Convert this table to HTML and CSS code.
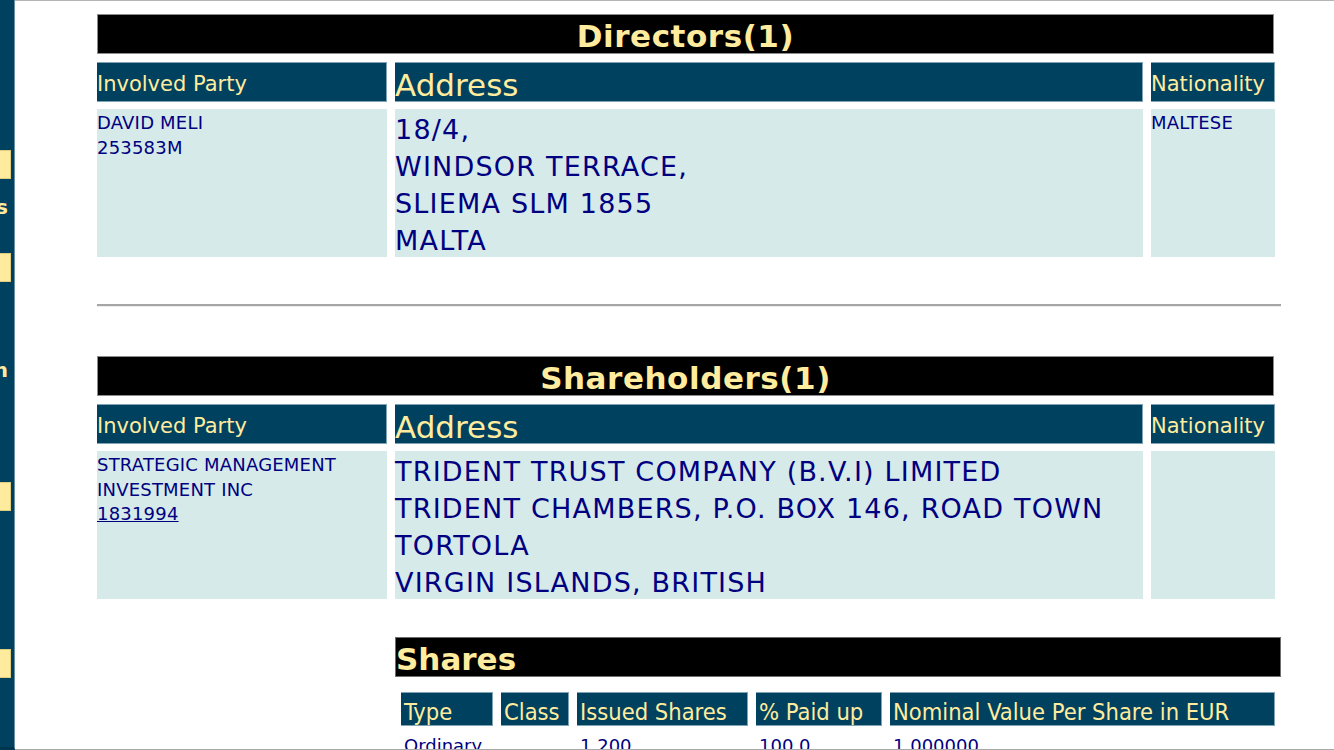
FILE: index.html
```html
<!DOCTYPE html>
<html lang="en">
<head>
<meta charset="utf-8">
<title>Company Involved Parties</title>
<link rel="stylesheet" href="styles.css">
</head>
<body>
<div class="frame">
  <nav class="sidebar">
    <div class="sb-btn sb-btn-1"></div>
    <div class="sb-label sb-label-1"><span>Involved Parties</span></div>
    <div class="sb-btn sb-btn-2"></div>
    <div class="sb-label sb-label-2"><span>Information</span></div>
    <div class="sb-btn sb-btn-3"></div>
    <div class="sb-btn sb-btn-4"></div>
  </nav>
  <main class="main">
    <section class="parties">
      <h2 class="section-title">Directors(1)</h2>
      <div class="party-grid">
        <div class="hcell">Involved Party</div>
        <div class="hcell big">Address</div>
        <div class="hcell">Nationality</div>
        <div class="dcell small">DAVID MELI<br>253583M</div>
        <div class="dcell addr">18/4,<br>WINDSOR TERRACE,<br>SLIEMA SLM 1855<br>MALTA</div>
        <div class="dcell small">MALTESE</div>
      </div>
    </section>

    <hr class="divider">

    <section class="parties">
      <h2 class="section-title">Shareholders(1)</h2>
      <div class="party-grid">
        <div class="hcell">Involved Party</div>
        <div class="hcell big">Address</div>
        <div class="hcell">Nationality</div>
        <div class="dcell small">STRATEGIC MANAGEMENT<br>INVESTMENT INC<br><a href="#" class="reg-link">1831994</a></div>
        <div class="dcell addr">TRIDENT TRUST COMPANY (B.V.I) LIMITED<br>TRIDENT CHAMBERS, P.O. BOX 146, ROAD TOWN<br>TORTOLA<br>VIRGIN ISLANDS, BRITISH</div>
        <div class="dcell small"></div>
      </div>
    </section>

    <section class="shares">
      <h3 class="shares-title">Shares</h3>
      <div class="shares-grid">
        <div class="shcell">Type</div>
        <div class="shcell">Class</div>
        <div class="shcell">Issued Shares</div>
        <div class="shcell">% Paid up</div>
        <div class="shcell">Nominal Value Per Share in EUR</div>
        <div class="sdcell">Ordinary</div>
        <div class="sdcell"></div>
        <div class="sdcell">1,200</div>
        <div class="sdcell">100.0</div>
        <div class="sdcell">1.000000</div>
      </div>
    </section>
  </main>
</div>
</body>
</html>
```

FILE: styles.css
```css
* { box-sizing: border-box; }

html, body {
  margin: 0;
  padding: 0;
  background: #ffffff;
  height: 750px;
  overflow: hidden;
  font-family: "DejaVu Sans", Verdana, sans-serif;
}

.frame {
  display: flex;
  height: 750px;
}

/* left menu (clipped) */
.sidebar {
  width: 15px;
  flex-shrink: 0;
  background: #00415f;
  border-right: 1px solid #6a90a4;
  overflow: hidden;
  display: flex;
  flex-direction: column;
  padding-top: 150px;
  border-bottom: 3px solid #003650;
}

.sb-btn {
  width: 11px;
  height: 29px;
  background: #ffeb9e;
  border: 1px solid #e0cc80;
  border-left: none;
  flex-shrink: 0;
}

.sb-label {
  display: flex;
  justify-content: flex-end;
  width: 8px;
  font-weight: bold;
  font-size: 20px;
  line-height: 24px;
  color: #ffeb9e;
  white-space: nowrap;
  flex-shrink: 0;
}

.sb-label span { flex-shrink: 0; }

.sb-label-1 { margin-top: 16px; }
.sb-btn-2 { margin-top: 34px; }
.sb-label-2 { margin-top: 76px; }
.sb-btn-3 { margin-top: 100px; }
.sb-btn-4 { margin-top: 138px; }

/* main area */
.main {
  flex: 1;
  border-top: 1px solid #b4b4b4;
  border-bottom: 1px solid #a8a8a8;
  padding: 13px 0 0 82px;
  overflow: hidden;
}

.section-title {
  margin: 0;
  width: 1177px;
  height: 40px;
  background: #000000;
  border: 1px solid #8c8c8c;
  color: #ffec9e;
  font-size: 31px;
  font-weight: bold;
  line-height: 32px;
  padding-top: 5px;
  letter-spacing: 0.55px;
  text-align: center;
}

.party-grid {
  display: grid;
  grid-template-columns: 290px 748px 124px;
  grid-template-rows: 40px 148px;
  column-gap: 8px;
  row-gap: 7px;
  margin-top: 8px;
  width: 1177px;
}

.hcell {
  height: 40px;
  background: #00415f;
  border: 1px solid #7fa3b4;
  border-left: none;
  color: #ffec9e;
  font-size: 21px;
  display: flex;
  align-items: center;
  padding-top: 3px;
  white-space: nowrap;
}

.hcell.big {
  font-size: 31px;
  padding-top: 5px;
}

.dcell {
  background: #d6eaea;
  color: #000080;
}

.dcell.small {
  font-size: 18px;
  line-height: 24.5px;
  padding-top: 2px;
  letter-spacing: 0.2px;
}

.dcell.addr {
  font-size: 27px;
  line-height: 37px;
  letter-spacing: 1.2px;
  padding-top: 2px;
  white-space: nowrap;
}

.reg-link {
  color: #000080;
  text-decoration: underline;
}

.divider {
  margin: 47px 0 0 0;
  width: 1184px;
  height: 0;
  border: none;
  border-top: 2px solid #a6a6a6;
  border-bottom: 1px solid #ececec;
}

.parties + .divider + .parties { margin-top: 49px; }

/* shares */
.shares {
  margin: 38px 0 0 298px;
  width: 886px;
}

.shares-title {
  margin: 0;
  height: 40px;
  background: #000000;
  border: 1px solid #6e6e6e;
  color: #ffec9e;
  font-size: 31px;
  font-weight: bold;
  line-height: 36px;
  padding-top: 3px;
}

.shares-grid {
  display: grid;
  grid-template-columns: 92px 68px 171px 126px 385px;
  column-gap: 8px;
  row-gap: 8px;
  margin: 15px 0 0 6px;
}

.shcell {
  height: 34px;
  background: #00415f;
  border: 1px solid #7fa3b4;
  border-left: none;
  color: #ffec9e;
  font-family: "DejaVu Sans Condensed", "DejaVu Sans", sans-serif;
  font-stretch: condensed;
  font-size: 23.5px;
  line-height: 24px;
  display: flex;
  align-items: center;
  padding: 6px 0 0 3px;
  white-space: nowrap;
}

.sdcell {
  color: #000080;
  font-size: 18px;
  line-height: 24px;
  padding-left: 3px;
}
```
